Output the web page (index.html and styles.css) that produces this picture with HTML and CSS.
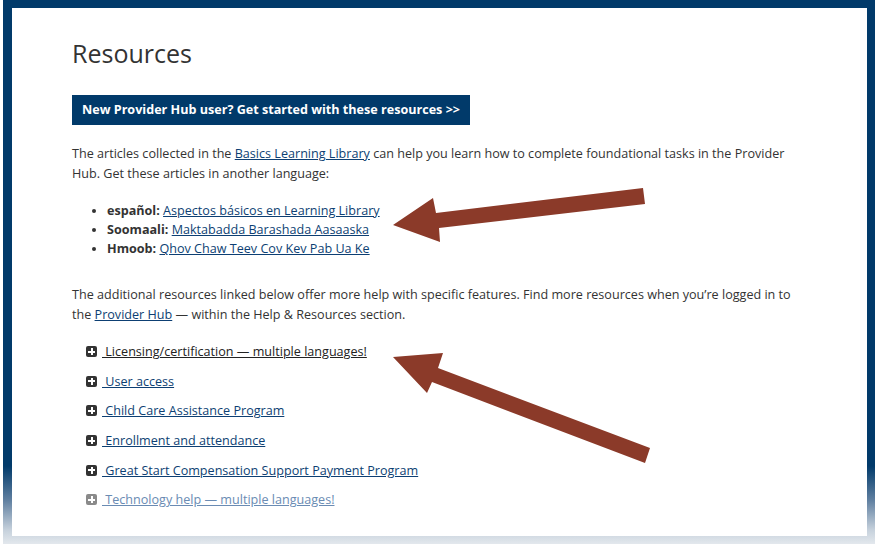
FILE: index.html
```html
<!doctype html>
<html>
 <head>
  <meta charset="utf-8">
  <link rel="stylesheet" href="styles.css">
 </head>
 <body>
  <div class="frame">
   <div class="panel">
    <h1 class="title">Resources</h1>
    <a class="start-btn" href="#">New Provider Hub user? Get started with these resources &gt;&gt;</a>

    <p class="intro first">The articles collected in the <a href="#">Basics Learning Library</a> can help you learn how to complete foundational tasks in the Provider Hub. Get these articles in another language:</p>

    <ul class="lang-list">
     <li><b>español:</b> <a href="#">Aspectos básicos en Learning Library</a></li>
     <li><b>Soomaali:</b> <a href="#">Maktabadda Barashada Aasaaska</a></li>
     <li><b>Hmoob:</b> <a href="#">Qhov Chaw Teev Cov Kev Pab Ua Ke</a></li>
    </ul>

    <p class="intro">The additional resources linked below offer more help with specific features. Find more resources when you’re logged in to the <a href="#">Provider Hub</a> — within the Help &amp; Resources section.</p>

    <ul class="accordion">
     <li class="active"><span class="plus"></span><a href="#"> Licensing/certification — multiple languages!</a></li>
     <li><span class="plus"></span><a href="#"> User access</a></li>
     <li><span class="plus"></span><a href="#"> Child Care Assistance Program</a></li>
     <li><span class="plus"></span><a href="#"> Enrollment and attendance</a></li>
     <li><span class="plus"></span><a href="#"> Great Start Compensation Support Payment Program</a></li>
     <li class="faded"><span class="plus"></span><a href="#"> Technology help — multiple languages!</a></li>
    </ul>
   </div>
  </div>

  <!-- annotation arrows drawn on top of the page -->
  <svg class="arrows" width="880" height="553" viewBox="0 0 880 553">
   <polygon points="643,188 645,204 439,228 440,242 393,225 433,198 436,213" />
   <polygon points="650,448 645,463 432,382 427,393 393,357 443,353 438,368" />
  </svg>
 </body>
</html>
```

FILE: styles.css
```css
body {
  margin: 0;
  background-color: #ffffff;
  font-family: "Open Sans", sans-serif;
  color: #333333;
  font-size: 12.6px;
  line-height: 20px;
  position: relative;
}

/* navy border round the screenshot, fading out at the bottom */
.frame {
  margin-left: 3px;
  width: 872px;
  height: 544px;
  box-sizing: border-box;
  padding: 8px 8px 8px 9px;
  background: linear-gradient(to bottom, #013a6a 0, #013a6a 466px, #5f7fa0 500px, #c6d1dc 530px, #e3e8ed 544px);
}

.panel {
  background-color: #ffffff;
  height: 100%;
  padding: 30px 60px 0 60px;
  box-sizing: border-box;
}

.title {
  margin: 0;
  font-size: 25px;
  line-height: 30px;
  font-weight: 400;
  color: #333333;
}

.start-btn {
  display: inline-block;
  margin-top: 27px;
  height: 30px;
  line-height: 30px;
  padding: 0 10px;
  background-color: #013a6a;
  color: #ffffff;
  font-size: 12.6px;
  font-weight: 700;
  text-decoration: none;
}

.intro {
  margin: 27px 0 0 0;
  width: 728px;
}

.intro.first {
  margin-top: 19px;
}

a {
  color: #0d3f73;
}

.lang-list {
  margin: 17px 0 0 0;
  padding-left: 35px;
  line-height: 19px;
}

.lang-list b {
  color: #333333;
}

.accordion {
  list-style: none;
  margin: 17px 0 0 0;
  padding-left: 14px;
}

.accordion li {
  line-height: 20px;
  margin-bottom: 9.7px;
}

.plus {
  display: inline-block;
  width: 11px;
  height: 11px;
  margin-right: 5px;
  border-radius: 2px;
  background-color: #333333;
  position: relative;
  vertical-align: -1px;
}

.plus::before,
.plus::after {
  content: "";
  position: absolute;
  background-color: #ffffff;
}

.plus::before {
  left: 2px;
  top: 4.5px;
  width: 7px;
  height: 2px;
}

.plus::after {
  left: 4.5px;
  top: 2px;
  width: 2px;
  height: 7px;
}

.accordion a {
  color: #0d3f73;
}

.accordion .active a {
  color: #222222;
}

.accordion .faded a {
  color: #6a8bb3;
}

.accordion .faded .plus {
  background-color: #8a8a8a;
}

.arrows {
  position: absolute;
  top: 0;
  left: 0;
  pointer-events: none;
}

.arrows polygon {
  fill: #8b3a29;
}
```
